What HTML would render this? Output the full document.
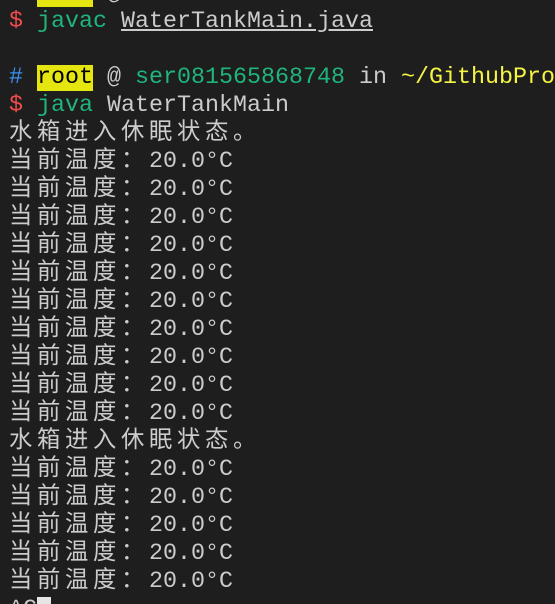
<!DOCTYPE html>
<html><head><meta charset="utf-8"><style>
html,body{margin:0;padding:0;background:#1e1e1e;width:555px;height:604px;overflow:hidden;position:relative}
.t{position:absolute;left:9px;top:-20px;font-family:"Liberation Mono","Noto Sans CJK SC",monospace;font-size:23.33px;line-height:28px;color:#cccccc;white-space:pre}
.c{letter-spacing:4.67px}
.r{color:#f14c4c}.g{color:#1fb57c}.b{color:#3b8eea}.y{color:#f5f543}
.hl{background:#e5e510;color:#000}
.u{text-decoration:underline}
.cur{background:#e5e5e5;color:#1e1e1e}
</style></head><body><div class="t"><span class="b">#</span> <span class="hl">root</span> @
<span class="r">$</span> <span class="g">javac</span> <span class="u">WaterTankMain.java</span>

<span class="b">#</span> <span class="hl">root</span> @ <span class="g">ser081565868748</span> in <span class="y">~/GithubPro</span>
<span class="r">$</span> <span class="g">java</span> WaterTankMain
<span class="c">水箱进入休眠状态。</span>
<span class="c">当前温度：</span>20.0°C
<span class="c">当前温度：</span>20.0°C
<span class="c">当前温度：</span>20.0°C
<span class="c">当前温度：</span>20.0°C
<span class="c">当前温度：</span>20.0°C
<span class="c">当前温度：</span>20.0°C
<span class="c">当前温度：</span>20.0°C
<span class="c">当前温度：</span>20.0°C
<span class="c">当前温度：</span>20.0°C
<span class="c">当前温度：</span>20.0°C
<span class="c">水箱进入休眠状态。</span>
<span class="c">当前温度：</span>20.0°C
<span class="c">当前温度：</span>20.0°C
<span class="c">当前温度：</span>20.0°C
<span class="c">当前温度：</span>20.0°C
<span class="c">当前温度：</span>20.0°C
^C<span class="cur"> </span></div></body></html>
